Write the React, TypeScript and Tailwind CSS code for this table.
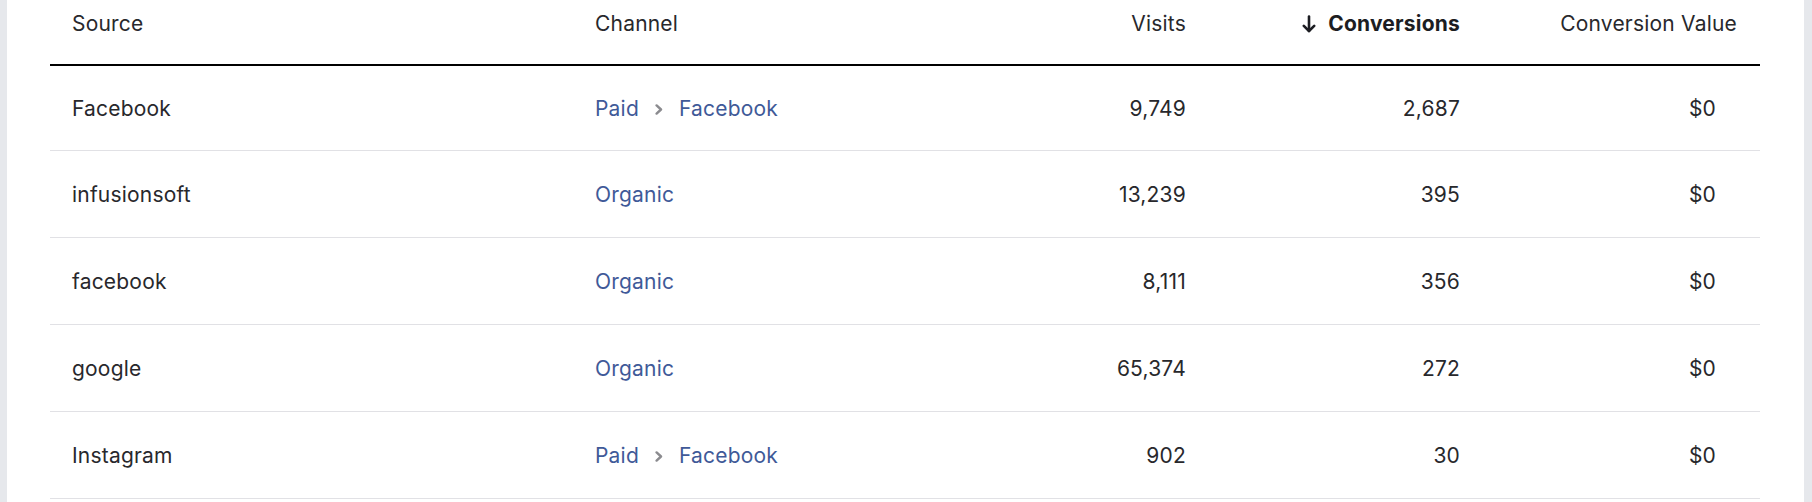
type Row = {
  source: string;
  channel: string[];
  visits: string;
  conversions: string;
  value: string;
};

const rows: Row[] = [
  { source: "Facebook", channel: ["Paid", "Facebook"], visits: "9,749", conversions: "2,687", value: "$0" },
  { source: "infusionsoft", channel: ["Organic"], visits: "13,239", conversions: "395", value: "$0" },
  { source: "facebook", channel: ["Organic"], visits: "8,111", conversions: "356", value: "$0" },
  { source: "google", channel: ["Organic"], visits: "65,374", conversions: "272", value: "$0" },
  { source: "Instagram", channel: ["Paid", "Facebook"], visits: "902", conversions: "30", value: "$0" },
];

const cols = "grid grid-cols-[523px_327px_308px_274px_278px]";

function Chevron() {
  return (
    <svg width="8" height="11" viewBox="0 0 8 11" fill="none" className="mx-[16px] mt-[1px]">
      <path d="M1.6 1.4 L6 5.5 L1.6 9.6" stroke="#8b8b8f" strokeWidth="2.4" strokeLinecap="round" strokeLinejoin="round" />
    </svg>
  );
}

function SortArrow() {
  return (
    <svg width="14" height="18" viewBox="0 0 14 18" fill="none">
      <path d="M7 1.5 V16" stroke="currentColor" strokeWidth="2.6" strokeLinecap="round" />
      <path d="M1.8 10.8 L7 16 L12.2 10.8" stroke="currentColor" strokeWidth="2.6" strokeLinecap="round" strokeLinejoin="round" />
    </svg>
  );
}

function Channel({ parts }: { parts: string[] }) {
  return (
    <div className="flex items-center text-[#3f5a98]">
      {parts.map((p, i) => (
        <span key={p + i} className="flex items-center">
          {i > 0 && <Chevron />}
          <span>{p}</span>
        </span>
      ))}
    </div>
  );
}

export default function App() {
  return (
    <div
      className="flex h-[502px] w-[1812px] bg-white overflow-hidden"
      style={{ fontFamily: "Inter, 'Noto Sans', sans-serif" }}
    >
      <div className="w-[7px] shrink-0 bg-[#e6e8ec]" />
      <div className="flex-1 pl-[43px]">
        <div className="w-[1710px] text-[21px] tracking-[0.2px] text-[#28282c]">
          <div className={`${cols} h-[66px] items-center border-b-2 border-black pb-[16px]`}>
            <div className="pl-[22px]">Source</div>
            <div className="pl-[22px]">Channel</div>
            <div className="pr-[22px] text-right">Visits</div>
            <div className="pr-[22px] flex items-center justify-end gap-[12px] font-bold text-[#1c1d22]">
              <SortArrow />
              <span>Conversions</span>
            </div>
            <div className="pr-[23px] text-right">Conversion Value</div>
          </div>
          {rows.map((r, i) => (
            <div
              key={r.source}
              className={`${cols} ${i === 0 ? "h-[85px]" : "h-[87px]"} items-center border-b border-[#e1e1e5] pt-[2px]`}
            >
              <div className="pl-[22px]">{r.source}</div>
              <div className="pl-[22px]">
                <Channel parts={r.channel} />
              </div>
              <div className="pr-[22px] text-right">{r.visits}</div>
              <div className="pr-[22px] text-right">{r.conversions}</div>
              <div className="pr-[44px] text-right">{r.value}</div>
            </div>
          ))}
        </div>
      </div>
      <div className="w-[8px] shrink-0 bg-[#e6e8ec]" />
    </div>
  );
}
